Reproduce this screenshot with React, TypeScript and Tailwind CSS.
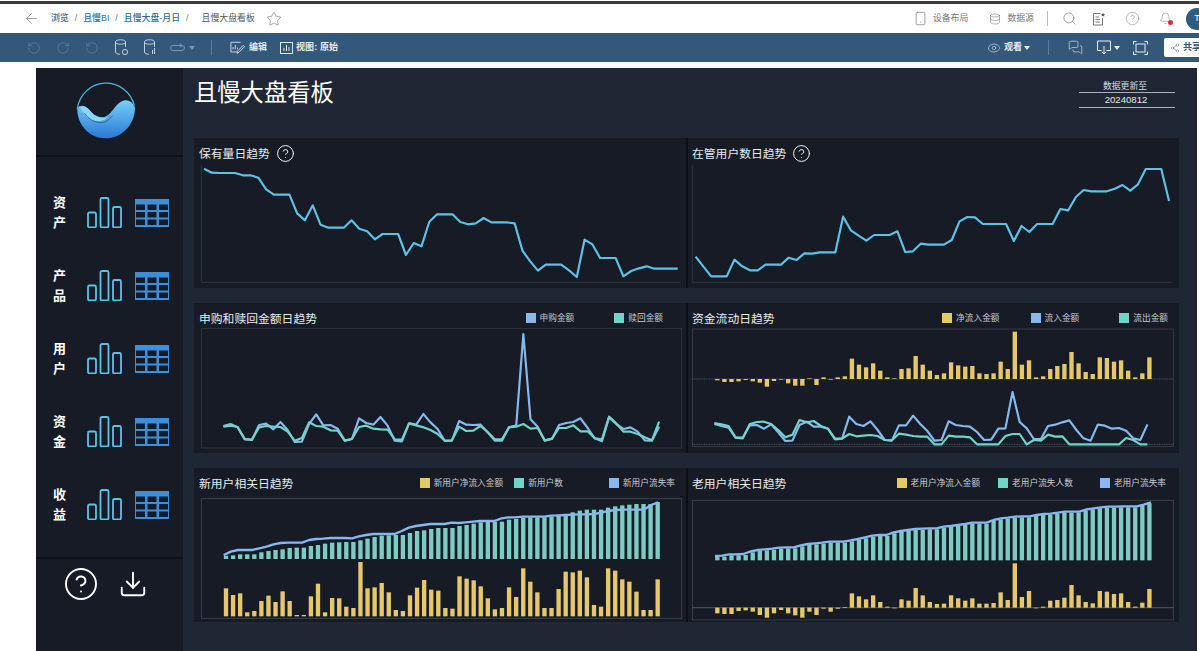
import type { ReactNode } from "react"
import { ArrowLeft, Bell, CircleHelp, Download, Eye, MessagesSquare, Search, Share2, Smartphone, Star, Database, RotateCcw, RotateCw } from "lucide-react"

const CYAN = "#5ec1e6"
const BLUE = "#87b9ef"
const GREEN = "#72d3c6"
const BAR_GREEN = "#7dccc3"
const YELLOW = "#e6c86a"

// all chart numbers are read off the 3x crops, so a viewBox unit is a third of a pixel
const holdings = [101,113,114,114,114,121,121,128,163,179,179,179,235,256,211,269,278,278,278,256,281,289,313,297,297,297,360,324,334,261,238,238,238,261,268,265,249,262,262,262,265,347,379,407,389,389,389,406,426,314,328,369,369,369,424,408,400,394,401,401,401,401]
const users = [365,395,424,424,424,374,394,406,406,389,389,389,368,375,355,356,352,352,352,245,286,302,317,300,300,300,289,351,349,326,329,329,329,315,259,246,247,267,267,267,267,318,273,291,267,267,267,222,226,186,165,169,169,169,161,150,167,148,102,102,102,198]
const buyIn = [378,372,382,418,420,375,371,388,366,390,426,425,372,343,376,375,386,422,417,355,369,374,351,377,422,424,370,374,342,367,387,423,422,363,374,375,374,397,422,422,381,377,102,358,380,422,417,375,369,366,355,384,415,424,352,372,387,382,395,421,422,380]
const redeem = [380,377,381,417,419,382,378,380,381,395,422,414,367,378,380,391,392,422,417,381,377,386,388,389,418,419,370,376,382,390,402,422,421,380,393,392,378,396,418,418,382,380,372,386,384,421,416,384,384,376,394,394,415,418,350,370,395,395,402,412,421,365]
const netFlow = [241,246,246,244,240,244,248,260,243,239,250,257,257,235,255,232,238,232,229,176,194,202,190,212,232,235,207,205,168,194,212,225,220,187,196,200,198,220,222,220,185,207,95,194,181,232,229,207,198,192,156,190,216,222,172,174,185,181,212,232,220,172]
const inflow = [372,378,383,413,413,376,375,386,373,397,423,422,375,365,380,380,386,416,416,350,372,378,364,390,420,422,376,376,347,372,393,422,420,364,375,378,380,396,420,419,386,385,276,366,385,417,417,378,374,367,361,390,415,422,374,377,386,384,392,415,420,373]
const outflow = [369,373,378,413,415,372,366,365,372,390,412,404,360,367,363,378,386,418,416,402,409,407,405,408,420,421,401,404,408,410,410,433,433,407,410,410,412,433,433,433,433,408,402,402,433,420,422,404,410,409,433,433,433,433,433,433,433,433,414,420,433,433]
const newUsers = [272,271,268,268,268,262,258,255,253,249,248,248,243,240,236,233,232,231,231,226,221,216,212,211,210,210,204,198,196,192,189,189,189,183,180,176,172,170,170,170,164,162,158,157,157,157,155,149,147,142,137,134,134,134,128,124,121,119,117,117,117,111]
const newRate = [270,260,255,255,255,250,245,238,234,233,233,233,225,222,221,219,219,219,220,214,210,207,207,207,207,198,188,183,180,177,177,177,173,174,172,170,168,168,168,160,157,157,155,155,155,155,152,151,150,149,148,148,147,143,138,135,134,134,134,134,120,112]
const newNet = [370,390,385,442,438,408,392,411,379,408,450,450,394,356,442,399,400,425,429,291,370,367,354,382,435,438,391,368,345,374,377,429,431,334,341,346,364,400,433,429,367,396,310,350,382,429,429,372,320,322,317,337,420,425,310,317,343,350,380,435,435,343]
const oldUsers = [276,275,271,271,270,262,258,256,254,251,250,250,244,240,238,236,233,233,233,229,225,220,215,213,213,205,201,198,195,194,193,193,188,186,183,180,176,176,176,168,163,161,158,157,157,153,150,149,146,143,143,143,136,133,130,128,128,127,127,127,122,115]
const oldNet = [445,447,447,438,436,440,450,458,445,435,445,451,458,440,450,431,440,431,426,385,394,403,391,411,425,430,403,407,369,391,411,417,416,391,400,407,400,416,416,414,382,405,295,396,378,430,425,407,405,398,360,391,411,415,378,380,387,385,411,425,413,372]

function Line({ ys, x0, step, color, width = 6.5 }: { ys: number[]; x0: number; step: number; color: string; width?: number }) {
  const pts = ys.map((y, i) => x0 + i * step + "," + y).join(" ")
  return <polyline points={pts} fill="none" stroke={color} strokeWidth={width} strokeLinejoin="round" />
}

function Bars({ ys, x0, step, base, color }: { ys: number[]; x0: number; step: number; base: number; color: string }) {
  return (
    <>
      {ys.map((y, i) => (
        <rect key={i} x={x0 + i * step - 6.5} y={Math.min(y, base)} width={13} height={Math.max(Math.abs(base - y), 2)} fill={color} />
      ))}
    </>
  )
}

function Chart({ left, tall, children }: { left?: boolean; tall?: boolean; children: ReactNode }) {
  const x = left ? 12 : 9
  const w = left ? 1476 : 1473
  const h = tall ? 387 : 375
  return (
    <svg viewBox={x + " 84 " + w + " " + h} className={(left ? "w-[492px]" : "w-[491px]") + (tall ? " h-[129px]" : " h-[125px]") + " block"}>
      {children}
    </svg>
  )
}

function Legend({ color, label, className }: { color: string; label: string; className?: string }) {
  return (
    <div className={"flex items-center gap-[4px] " + (className ?? "")}>
      <span className="size-[10px]" style={{ backgroundColor: color }} />
      <span className="text-[8.7px] leading-none text-[#c6ccd4]">{label}</span>
    </div>
  )
}

function Panel({ title, help, left, legend, pr, children }: { title: string; help?: boolean; left?: boolean; legend?: ReactNode; pr?: string; children: ReactNode }) {
  return (
    <div className={"bg-[#161b25] flex flex-col " + (left ? "" : "border-l-2 border-[#0c0f15]")}>
      <div className={"flex h-[25px] items-center pt-[5px] " + (left ? "pl-[5px] " : "pl-[4px] ") + (pr ?? "")}>
        <span className="mt-[3px] text-[11.8px] leading-none text-[#e8ebee]">{title}</span>
        {help && <CircleHelp size={19} strokeWidth={1.2} className="ml-[6px] text-white" />}
        {legend && <div className="ml-auto flex items-center">{legend}</div>}
      </div>
      {children}
    </div>
  )
}

function BarsIcon() {
  return (
    <svg width="35" height="31" viewBox="0 0 35 31" fill="none" stroke="#5ac3ea" strokeWidth="1.8">
      <rect x="1" y="15.5" width="8" height="15" rx="1.5" />
      <rect x="13.5" y="1" width="8" height="29.5" rx="1.5" />
      <rect x="26" y="10" width="8" height="20.5" rx="1.5" />
    </svg>
  )
}

function TableIcon() {
  return (
    <svg width="34" height="28" viewBox="0 0 34 28" fill="#3f8fd8">
      <rect width="34" height="28" />
      {[5.5, 13, 20.5].map((y) =>
        [1, 12.5, 24].map((x) => <rect key={x + "-" + y} x={x} y={y} width="9" height="5.5" fill="#141a26" />)
      )}
    </svg>
  )
}

function SideItem({ a, b }: { a: string; b: string }) {
  return (
    <div className="flex h-[73px] items-center pl-[17px]">
      <div className="flex w-[14px] flex-col gap-[7px] text-[13px] leading-[13px] font-bold text-white">
        <span>{a}</span>
        <span>{b}</span>
      </div>
      <div className="ml-[20px]"><BarsIcon /></div>
      <div className="ml-[13px]"><TableIcon /></div>
    </div>
  )
}

function Logo() {
  return (
    <svg width="60" height="62" viewBox="50 30 178 186" fill="none">
      <defs>
        <linearGradient id="wave" x1="0" y1="0" x2="0" y2="1">
          <stop offset="0" stopColor="#74d0fa" />
          <stop offset="1" stopColor="#2c78d4" />
        </linearGradient>
      </defs>
      <path d="M53 124 C 60 114 74 114 84 124 C 96 138 108 150 128 151 C 156 150 164 108 194 100 C 208 97 220 106 226 122 C 226 172 186 214 138 214 C 90 214 51 174 53 124 Z" fill="url(#wave)" />
      <path d="M62 122 C 72 114 84 122 94 134 C 104 146 116 152 130 152 C 136 152 140 151 144 149 C 128 172 84 168 62 122 Z" fill="#8ad6f7" />
      <path d="M74 138 C 90 162 118 172 138 164 C 146 160 152 154 158 146" stroke="#1a2a3e" strokeWidth="2.5" opacity="0.6" />
      <path d="M53 126 A 87 88 0 0 1 224 116" stroke="#4fb4dc" strokeWidth="4" />
    </svg>
  )
}

function DbGlyph({ refresh }: { refresh?: boolean }) {
  return (
    <svg width="15" height="17" viewBox="0 0 15 17" fill="none" stroke="#c4d0db" strokeWidth="1">
      <ellipse cx="6.5" cy="3" rx="5" ry="2.2" />
      <path d="M1.5 3v10c0 1.3 2 2.2 4.5 2.2M11.5 3v5" />
      {refresh ? <circle cx="11" cy="13" r="2.6" /> : <path d="M9.5 15v-4M11.5 15v-6" />}
    </svg>
  )
}

function SwapGlyph() {
  return (
    <svg width="15" height="10" viewBox="0 0 15 10" fill="none" stroke="#7c97af" strokeWidth="1">
      <rect x="0.5" y="2.5" width="14" height="5" rx="2.5" />
      <path d="M10 0.5l2 2-2 2" />
    </svg>
  )
}

function EditGlyph() {
  return (
    <svg width="15" height="14" viewBox="0 0 17 15" fill="none" stroke="#dfe6ec" strokeWidth="1">
      <path d="M12 1H1v11h7" />
      <path d="M3.5 9V6.5M6 9V4M8.5 9V7" />
      <path d="M8 13.5l1-3L15 4.5l1.5 1.5-6 6z" />
    </svg>
  )
}

function ViewGlyph() {
  return (
    <svg width="13" height="12" viewBox="0 0 13 12" fill="none" stroke="#dfe6ec" strokeWidth="1">
      <rect x="0.5" y="0.5" width="12" height="11" />
      <path d="M4 9V6M6.5 9V3M9 9V5" />
    </svg>
  )
}

function ExportGlyph() {
  return (
    <svg width="14" height="15" viewBox="0 0 14 15" fill="none" stroke="#e6ecf1" strokeWidth="1">
      <path d="M4.5 10.5H0.5V1H13.5V10.5H9.5" />
      <path d="M7 6V14M4.8 11.8L7 14l2.2-2.2" />
    </svg>
  )
}

function FullscreenGlyph() {
  return (
    <svg width="15" height="14" viewBox="0 0 15 14" fill="none" stroke="#e6ecf1" strokeWidth="1">
      <path d="M0.5 3.5V0.5H3.5M11.5 0.5H14.5V3.5M14.5 10.5V13.5H11.5M3.5 13.5H0.5V10.5" />
      <rect x="3" y="3" width="9" height="8" />
    </svg>
  )
}

function NotesGlyph() {
  return (
    <svg width="14" height="14" viewBox="0 0 14 14" fill="none" stroke="#777" strokeWidth="1">
      <path d="M8.5 1.5H1.5V13H10.5V6" />
      <path d="M3.5 5H7M3.5 7.5H8M3.5 10H8" />
      <path d="M11 0.5l0.6 1.4 1.4 0.2-1 1 0.3 1.4-1.3-0.7-1.3 0.7 0.3-1.4-1-1 1.4-0.2z" fill="#555" stroke="none" />
    </svg>
  )
}

function Caret({ color, className }: { color: string; className?: string }) {
  return <span className={"size-0 border-x-[3px] border-t-[4px] border-x-transparent " + (className ?? "ml-[4px]")} style={{ borderTopColor: color }} />
}

function TopBar() {
  return (
    <div className="flex h-[29px] items-center bg-white pl-[23px] text-[8.9px] leading-none">
      <ArrowLeft size={17} strokeWidth={0.9} className="text-[#666]" />
      <div className="ml-[11px] flex items-center font-medium text-[#2d6a97]">
        <span>浏览</span>
        <span className="mx-[6px] text-[#777]">/</span>
        <span>且慢BI</span>
        <span className="mx-[6px] text-[#777]">/</span>
        <span>且慢大盘-月日</span>
        <span className="mx-[6px] text-[#777]">/</span>
        <span className="ml-[7px] font-normal text-[#555]">且慢大盘看板</span>
      </div>
      <Star size={16} strokeWidth={0.9} className="ml-[11px] text-[#666]" />
      <div className="ml-auto flex items-center text-[#777]">
        <Smartphone size={15} strokeWidth={1} className="text-[#666]" />
        <span className="ml-[5px]">设备布局</span>
        <Database size={12} strokeWidth={1} className="ml-[21px] text-[#666]" />
        <span className="ml-[6px]">数据源</span>
        <span className="ml-[13px] h-[15px] w-px bg-[#bbb]" />
        <Search size={15} strokeWidth={1} className="ml-[14px] text-[#777]" />
        <div className="ml-[15px]"><NotesGlyph /></div>
        <CircleHelp size={15} strokeWidth={0.9} className="ml-[19px] text-[#888]" />
        <div className="relative ml-[19px]">
          <Bell size={13} strokeWidth={1} className="text-[#777]" />
          <span className="absolute right-[-1px] bottom-[0px] size-[5px] rounded-full bg-[#d9302c]" />
        </div>
        <div className="ml-[14px] -mr-[9px] flex size-[22px] items-center justify-center rounded-full bg-[#2e5c80] text-[9px] text-white">T</div>
      </div>
    </div>
  )
}

function ToolBar() {
  return (
    <div className="flex h-[29px] items-center bg-[#34587a] pl-[27px] text-[9px] leading-none font-bold text-[#e6ecf1]">
      <RotateCcw size={14} strokeWidth={1} className="text-[#6f8ba5]" />
      <RotateCw size={14} strokeWidth={1} className="ml-[15px] text-[#6f8ba5]" />
      <RotateCcw size={14} strokeWidth={1} className="ml-[15px] text-[#6f8ba5]" />
      <div className="ml-[15px]"><DbGlyph refresh /></div>
      <div className="ml-[14px]"><DbGlyph /></div>
      <div className="ml-[12px]"><SwapGlyph /></div>
      <Caret color="#7c97af" />
      <span className="ml-[16px] h-[15px] w-px bg-[#5d7d99]" />
      <div className="ml-[18px]"><EditGlyph /></div>
      <span className="ml-[4px]">编辑</span>
      <div className="ml-[13px]"><ViewGlyph /></div>
      <span className="ml-[3px] tracking-[0.1px]">视图: 原始</span>
      <div className="ml-auto flex items-center">
        <Eye size={14} strokeWidth={1} />
        <span className="ml-[3px]">观看</span>
        <Caret color="#e6ecf1" className="ml-[2px]" />
        <span className="ml-[18px] h-[15px] w-px bg-[#5d7d99]" />
        <MessagesSquare size={15} strokeWidth={1} className="ml-[19px]" />
        <div className="ml-[14px]"><ExportGlyph /></div>
        <Caret color="#e6ecf1" className="ml-[3px]" />
        <div className="ml-[13px]"><FullscreenGlyph /></div>
        <div className="ml-[16px] -mr-[8px] flex h-[19px] w-[43px] items-center rounded-[2px] bg-white pl-[6px] text-[#34587a]">
          <Share2 size={10} strokeWidth={1} />
          <span className="ml-[3px] whitespace-nowrap">共享</span>
        </div>
      </div>
    </div>
  )
}

export default function App() {
  const axis = "#333a47"
  return (
    <div className="flex h-[651px] w-[1199px] flex-col overflow-hidden bg-white font-['Liberation_Sans','Noto_Sans_CJK_SC',sans-serif]">
      <div className="mt-px h-[3px] bg-[#3a3a3a]" />
      <TopBar />
      <ToolBar />
      <div className="ml-[36px] mt-[6px] flex w-[1161px] flex-1 bg-[#1f2735]">
        {/* Sidebar */}
        <div className="flex w-[147px] flex-col bg-[#161b25]">
          <div className="flex h-[89px] items-center justify-center border-b-2 border-[#0c0f15] pr-[7px] pb-[7px]">
            <Logo />
          </div>
          <div className="flex h-[402px] flex-col border-b-2 border-[#0c0f15] pt-[19px]">
            <SideItem a="资" b="产" />
            <SideItem a="产" b="品" />
            <SideItem a="用" b="户" />
            <SideItem a="资" b="金" />
            <SideItem a="收" b="益" />
          </div>
          <div className="flex items-center pt-[7px] pl-[27px]">
            <CircleHelp size={36} strokeWidth={1.3} className="text-white" />
            <Download size={30} strokeWidth={1.5} className="ml-[19px] text-white" />
          </div>
        </div>

        {/* Main */}
        <div className="flex flex-1 flex-col pl-[11px]">
          <div className="flex h-[70px] justify-between pr-[22px]">
            <h1 className="pt-[8px] text-[23.3px] leading-[34px] font-normal text-white">且慢大盘看板</h1>
            <div className="mt-[13px] flex h-[27px] w-[96px] flex-col items-center text-[8.8px] leading-none text-[#d8dce2]">
              <div className="flex h-[12px] w-full items-center justify-center border-b border-[#aab0b8] pr-[4px]">数据更新至</div>
              <div className="flex h-[15px] w-full items-center justify-center border-b border-[#aab0b8] pr-[2px] text-[9.6px] text-[#e6e9ed]">20240812</div>
            </div>
          </div>

          <div className="grid grid-cols-[492px_493px] grid-rows-[150px_150px_154px] gap-y-[15px]">
            <Panel title="保有量日趋势" help left>
              <Chart left>
                <path d="M34 90V442H1472" fill="none" stroke={axis} strokeWidth="2.5" />
                <Line ys={holdings} x0={42} step={23.3} color={CYAN} />
              </Chart>
            </Panel>

            <Panel title="在管用户数日趋势" help>
              <Chart>
                <path d="M22 90V442H1462" fill="none" stroke={axis} strokeWidth="2.5" />
                <Line ys={users} x0={32} step={23.28} color={CYAN} />
              </Chart>
            </Panel>

            <Panel
              title="申购和赎回金额日趋势"
              left
              pr="pr-[23px]"
              legend={<>
                <Legend color={BLUE} label="申购金额" />
                <Legend color={GREEN} label="赎回金额" className="ml-[40px]" />
              </>}
            >
              <Chart left>
                <rect x="34" y="86" width="1441" height="358" fill="none" stroke={axis} strokeWidth="2.5" />
                <Line ys={buyIn} x0={100} step={21.43} color={BLUE} />
                <Line ys={redeem} x0={100} step={21.43} color={GREEN} />
              </Chart>
            </Panel>

            <Panel
              title="资金流动日趋势"
              pr="pr-[11px]"
              legend={<>
                <Legend color={YELLOW} label="净流入金额" />
                <Legend color={BLUE} label="流入金额" className="ml-[31px]" />
                <Legend color={GREEN} label="流出金额" className="ml-[40px]" />
              </>}
            >
              <Chart>
                <rect x="22" y="87" width="1443" height="353" fill="none" stroke="#3a424f" strokeWidth="2.5" />
                <path d="M22 237H1465M22 433H1465" stroke="#6d7480" strokeWidth="2" strokeDasharray="3 2" />
                <Bars ys={netFlow} x0={97} step={21.25} base={237} color={YELLOW} />
                <Line ys={inflow} x0={88} step={21.3} color={BLUE} />
                <Line ys={outflow} x0={88} step={21.3} color={GREEN} />
              </Chart>
            </Panel>

            <Panel
              title="新用户相关日趋势"
              left
              pr="pr-[11px]"
              legend={<>
                <Legend color={YELLOW} label="新用户净流入金额" />
                <Legend color={GREEN} label="新用户数" className="ml-[11px]" />
                <Legend color={BLUE} label="新用户流失率" className="ml-[46px]" />
              </>}
            >
              <Chart left tall>
                <rect x="34" y="101" width="1441" height="359" fill="none" stroke="#3f4753" strokeWidth="2.5" />
                <Bars ys={newUsers} x0={108} step={21.23} base={282} color={BAR_GREEN} />
                <Bars ys={newNet} x0={108} step={21.23} base={454} color={YELLOW} />
                <Line ys={newRate} x0={101} step={21.37} color={BLUE} width={7} />
              </Chart>
            </Panel>

            <Panel
              title="老用户相关日趋势"
              pr="pr-[13px]"
              legend={<>
                <Legend color={YELLOW} label="老用户净流入金额" />
                <Legend color={GREEN} label="老用户流失人数" className="ml-[18px]" />
                <Legend color={BLUE} label="老用户流失率" className="ml-[27px]" />
              </>}
            >
              <Chart tall>
                <rect x="22" y="106" width="1443" height="359" fill="none" stroke="#3f4753" strokeWidth="2.5" />
                <path d="M22 428H1465" stroke="#6d7480" strokeWidth="2" />
                <Bars ys={oldUsers} x0={97} step={21.25} base={286} color={BAR_GREEN} />
                <Bars ys={oldNet} x0={97} step={21.25} base={428} color={YELLOW} />
                <Line ys={oldUsers.map((y) => y - 3)} x0={90} step={21.44} color={BLUE} width={7} />
              </Chart>
            </Panel>
          </div>
        </div>
      </div>
    </div>
  )
}
